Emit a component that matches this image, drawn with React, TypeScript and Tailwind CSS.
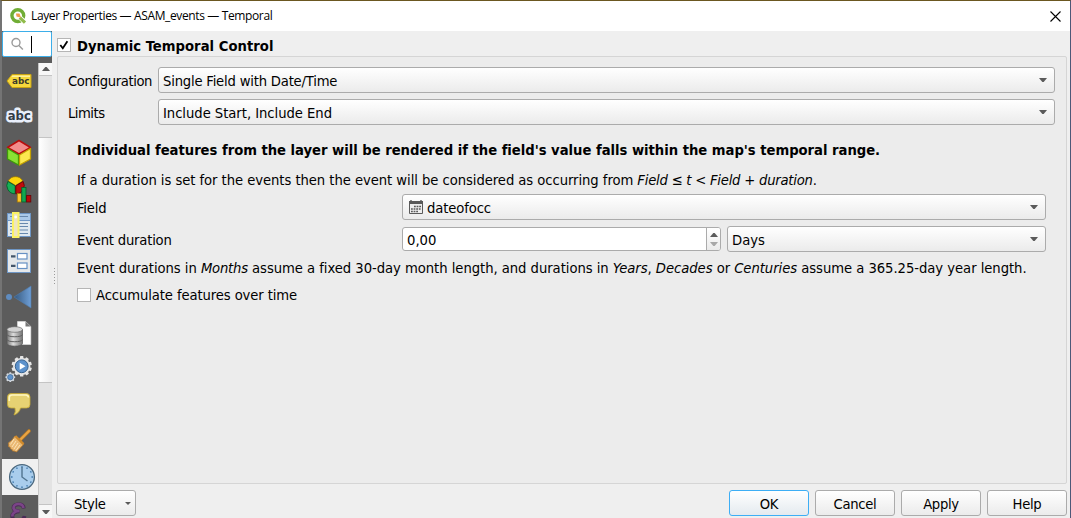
import React from 'react';

const Arrow = ({ up = false, className = 'text-[#5a5a5a]' }: { up?: boolean; className?: string }) => (
  <svg width="8" height="4" viewBox="0 0 8 4" className={`shrink-0 ${className}`}>
    <path d={up ? 'M0 4H8L4.7 0H3.3Z' : 'M0 0H8L4.7 4H3.3Z'} fill="currentColor" />
  </svg>
);

const SideIcon = ({ children, selected = false }: { children: React.ReactNode; selected?: boolean }) => (
  <div className={selected ? 'h-9 w-9 shrink-0 bg-[#f0f0f0]' : 'h-9 w-9 shrink-0'}>
    <svg width="36" height="36" viewBox="0 0 36 36" className="block shrink-0">
      {children}
    </svg>
  </div>
);

const ABC = "font-['DejaVu_Sans'] font-bold [font-stretch:normal]";

const gear = (cx: number, cy: number, r: number, n: number, w: number) =>
  Array.from({ length: n }, (_, i) => (
    <rect
      key={i}
      x={cx - w / 2}
      y={cy - r}
      width={w}
      height={r}
      rx="0.6"
      transform={`rotate(${(i * 360) / n} ${cx} ${cy})`}
    />
  ));

function Sidebar() {
  return (
    <div className="flex h-[455px] w-9 flex-col overflow-hidden">
      <SideIcon>
        <path d="M5 18L10 11.5H29V24.5H10Z" fill="#f6d83c" stroke="#c9a413" />
        <path d="M10.5 12.5H28V14H9.5Z" fill="#fff09a" />
        <text x="10" y="21.3" fontSize="9.5" textLength="17.5" lengthAdjust="spacingAndGlyphs" className={ABC} fill="#3b3a2c">abc</text>
      </SideIcon>
      <SideIcon>
        <text x="5.8" y="21.3" fontSize="13" textLength="23" lengthAdjust="spacingAndGlyphs" className={ABC} fill="#e9effb" stroke="#e9effb" strokeWidth="5" strokeLinejoin="round">abc</text>
        <text x="5.8" y="21.3" fontSize="13" textLength="23" lengthAdjust="spacingAndGlyphs" className={ABC} fill="#333b45">abc</text>
      </SideIcon>
      <SideIcon>
        <path d="M17 5.5L28.5 12.5L17 19L5.5 12.5Z" fill="#f28c8c" stroke="#b80d0d" strokeWidth="1.5" strokeLinejoin="round" />
        <path d="M5.5 13.5L16.5 20V30L5.5 24Z" fill="#8ae234" stroke="#3d9a08" strokeWidth="1.3" strokeLinejoin="round" />
        <path d="M28.5 13.5L17.5 20V30L28.5 24Z" fill="#fce94f" stroke="#c4a000" strokeWidth="1.3" strokeLinejoin="round" />
      </SideIcon>
      <SideIcon>
        <path d="M13.5 14.5L6.2 10A8.3 8.3 0 0 1 20.8 10Z" fill="#fcd50c" stroke="#9c7904" strokeWidth="0.8" />
        <path d="M13.2 14.8L5.9 10.4A8.3 8.3 0 0 0 13.2 22.8Z" fill="#16b057" stroke="#065e2b" strokeWidth="0.9" />
        <path d="M13.8 14.8L21.1 10.4A8.3 8.3 0 0 1 13.8 22.8Z" fill="#c00c0c" stroke="#660404" strokeWidth="0.9" />
        <rect x="15.3" y="22.5" width="4" height="8.5" fill="#fcc62c" stroke="#a97a06" strokeWidth="0.8" />
        <rect x="19.8" y="16.5" width="4.2" height="14.5" fill="#12a850" stroke="#065e2b" strokeWidth="0.8" />
        <rect x="24.6" y="24.5" width="4.2" height="6.5" fill="#b80a0a" stroke="#660404" strokeWidth="0.8" />
      </SideIcon>
      <SideIcon>
        <rect x="5.5" y="6.5" width="23" height="23" fill="#dfe8ef" stroke="#6e96c5" />
        <rect x="6" y="7" width="22" height="6" fill="#a9c8e8" />
        <path d="M6 13.5H28" stroke="#6e96c5" />
        <path d="M8 9.5H26M8 16.5H26M8 19.5H26M8 23H26M8 26.5H26" stroke="#6788ad" strokeWidth="1.2" />
        <rect x="11" y="6" width="5.5" height="24" fill="#eee5c0" stroke="#fbf264" strokeWidth="2" />
        <circle cx="13.7" cy="10" r="1.4" fill="#fff" />
      </SideIcon>
      <SideIcon>
        <rect x="5.5" y="6.5" width="23" height="23" fill="#e5e8ea" stroke="#6e96c5" />
        <rect x="15.5" y="10.5" width="9.5" height="5.5" fill="#fff" stroke="#6791c4" strokeWidth="1.2" />
        <rect x="15.5" y="20" width="9.5" height="5.5" fill="#fff" stroke="#6791c4" strokeWidth="1.2" />
        <path d="M9 13.3H13.5M9 22.8H13.5" stroke="#43566b" strokeWidth="2.2" />
      </SideIcon>
      <SideIcon>
        <defs>
          <linearGradient id="tri"><stop stopColor="#36597f" /><stop offset="1" stopColor="#6f9fd6" /></linearGradient>
        </defs>
        <circle cx="7" cy="18" r="3" fill="#5f8cc0" />
        <path d="M12 18L29 7V29Z" fill="url(#tri)" stroke="#4f7cae" strokeWidth="0.6" />
      </SideIcon>
      <SideIcon>
        <defs>
          <linearGradient id="db"><stop stopColor="#777" /><stop offset="0.4" stopColor="#ddd" /><stop offset="1" stopColor="#737373" /></linearGradient>
        </defs>
        <path d="M15.5 6.5H23.5L28.8 11.5V29.5H15.5Z" fill="#fff" stroke="#e4e4e4" strokeWidth="0.6" />
        <path d="M23.5 6.5V11.5H28.8Z" fill="#777" />
        <path d="M5 14.5V28.5C5 32 20.5 32 20.5 28.5V14.5Z" fill="url(#db)" stroke="#555" strokeWidth="0.7" />
        <path d="M5 19.5C5 22.5 20.5 22.5 20.5 19.5M5 24.5C5 27.5 20.5 27.5 20.5 24.5" fill="none" stroke="#5f5f5f" />
        <ellipse cx="12.75" cy="14.5" rx="7.75" ry="2.8" fill="#d3d3d3" stroke="#6b6b6b" strokeWidth="0.7" />
      </SideIcon>
      <SideIcon>
        <g fill="#e6e6e6">{gear(19.7, 15.3, 10.2, 10, 3.4)}<circle cx="19.7" cy="15.3" r="8.6" /></g>
        <circle cx="19.7" cy="15.3" r="6.4" fill="#5d92cc" stroke="#35618f" />
        <path d="M17.7 11.8L23.5 15.3L17.7 18.8Z" fill="#fff" />
        <g fill="#d2d8df">{gear(8.3, 26.2, 4.9, 8, 2)}<circle cx="8.3" cy="26.2" r="3.9" /></g>
        <circle cx="8.3" cy="26.2" r="2.7" fill="#5d92cc" stroke="#35618f" strokeWidth="0.6" />
      </SideIcon>
      <SideIcon>
        <path d="M9 6.5H24.5Q28 6.5 28 10V17.5Q28 21 24.5 21H18.5Q17.5 26 12 28Q14 24.5 13 21H9Q5.5 21 5.5 17.5V10Q5.5 6.5 9 6.5Z" fill="#e6d273" stroke="#c5a935" strokeWidth="0.8" />
        <path d="M7.3 14V10.5Q7.3 8 10 8H23.5Q26.3 8 26.5 10.5" fill="none" stroke="#fff7c0" strokeWidth="1.6" />
      </SideIcon>
      <SideIcon>
        <path d="M18 17L27 8" stroke="#b87a24" strokeWidth="3.6" strokeLinecap="round" />
        <path d="M18 17L27 8" stroke="#eba545" strokeWidth="2.2" strokeLinecap="round" />
        <path d="M13 13L21.5 21.5L14.5 29Q12 27.5 10.5 28Q10.8 26 8.6 26Q8.8 23.8 6.5 23.5Q7 21.5 6.3 20Q10.5 17.5 13 13Z" fill="#eab872" stroke="#b87a2c" strokeWidth="0.8" />
        <path d="M12 16L8.5 21.5M14 18L10 24M16 20L12 26M18 22L14 27.5" stroke="#fbe3b8" strokeWidth="1" />
        <path d="M13.3 13L21.5 21.2" stroke="#cf8a2c" strokeWidth="2.4" />
      </SideIcon>
      <SideIcon selected>
        <circle cx="20" cy="18" r="12.4" fill="#a9cdec" stroke="#4b687e" strokeWidth="1.3" />
        <g fill="#4e84b5">
          {Array.from({ length: 12 }, (_, i) => (
            <circle key={i} cx="20" cy="7.8" r="0.9" transform={`rotate(${i * 30} 20 18)`} />
          ))}
        </g>
        <path d="M20 8V18L25.5 22" fill="none" stroke="#51748f" strokeWidth="1.4" />
      </SideIcon>
      <SideIcon>
        <path d="M21.8 13.5Q21.5 9 16 9.3Q11.3 9.8 11.5 13Q11.8 16.3 17.5 16.3Q10.3 16.5 10.3 21.5Q10.8 26 16 26Q21.5 26 22.5 21" fill="none" stroke="#4a2a55" strokeWidth="3.8" />
        <path d="M21.5 13Q21 8.8 16 9Q11.5 9.5 11.5 13Q11.8 16 17.5 16Q10.3 16.2 10.3 21.5" fill="none" stroke="#7b4488" strokeWidth="2.6" />
      </SideIcon>
    </div>
  );
}

const FIELD = 'flex items-center rounded-[3px] border border-[#ababab] bg-linear-to-b from-white to-[#ebebeb]';

const Combo = ({ className, children }: { className: string; children: React.ReactNode }) => (
  <div className={`${FIELD} h-[26px] justify-between pr-[7px] pl-1 ${className}`}>
    <span className="pt-[2px]">{children}</span>
    <Arrow />
  </div>
);

const Button = ({ children, primary = false }: { children: React.ReactNode; primary?: boolean }) => (
  <button
    className={
      primary
        ? 'h-[26px] w-20 rounded-[3px] border border-[#3daef5] bg-linear-to-b from-white to-[#e4eaef] pt-[2px] leading-[22px] tracking-[-0.3px]'
        : 'h-[26px] w-20 rounded-[3px] border border-[#ababab] bg-linear-to-b from-white to-[#ebebeb] pt-[2px] leading-[22px] tracking-[-0.3px]'
    }
  >
    {children}
  </button>
);

export default function App() {
  return (
    <div className="flex h-[518px] w-[1071px] flex-col overflow-hidden border-t border-r border-l-2 border-t-[#6b5720] border-r-[#4d5878] border-l-[#747474] bg-[#efefef] font-['DejaVu_Sans_Condensed','DejaVu_Sans',sans-serif] text-[14.67px] whitespace-nowrap text-black [font-stretch:condensed]">
      <header className="flex h-[30px] shrink-0 items-center bg-white pr-[9px] pl-2">
        <svg width="17" height="17" viewBox="0 0 17 17">
          <circle cx="7.8" cy="7.6" r="5.9" fill="none" stroke="#70ad35" strokeWidth="3.4" />
          <path d="M9 8.7L15 14.5" stroke="#fff" strokeWidth="4.6" />
          <path d="M9.8 9.6L15 14.6" stroke="#8fbb4a" strokeWidth="3.2" />
          <path d="M6 5.5H9.5L11 9.8L6.5 8.5Z" fill="#f09a4b" />
        </svg>
        <h1 className="ml-1 grow font-['Open_Sans',sans-serif] text-[12px] tracking-[-0.37px] [font-stretch:normal]">Layer Properties — ASAM_events — Temporal</h1>
        <svg width="11" height="11" viewBox="0 0 11 11">
          <path d="M0.5 0.5L10.5 10.5M10.5 0.5L0.5 10.5" stroke="#000" strokeWidth="1.1" />
        </svg>
      </header>

      <div className="flex min-h-0 grow">
        <aside className="flex w-[50px] shrink-0 flex-col bg-[#5c5c5c]">
          <div className="flex h-[26px] shrink-0 items-center rounded-[2px] border border-[#3daee9] bg-white pl-2">
            <svg width="14" height="14" viewBox="0 0 14 14" fill="none" stroke="#9b9b9b" strokeWidth="1.4">
              <circle cx="5" cy="5.5" r="4" />
              <path d="M7.9 8.4L11.9 12.4" />
            </svg>
            <div className="ml-[6px] h-[17px] w-px bg-black" />
          </div>
          <div className="mt-[6px] flex min-h-0 grow">
            <Sidebar />
            <div className="flex w-[14px] flex-col border-l border-[#c6c6c6] bg-[#e3e3e3]">
              <div className="flex h-[13px] items-center justify-center border-b border-[#c4c4c4] bg-[#f7f7f7]">
                <Arrow up />
              </div>
              <div className="mt-[61px] h-[246px] border-y border-[#c4c4c4] bg-linear-to-r from-white to-[#ececec]" />
              <div className="grow" />
              <div className="flex h-[14px] items-center justify-center border-t border-[#c4c4c4] bg-[#f7f7f7]">
                <Arrow />
              </div>
            </div>
          </div>
        </aside>

        <div className="flex w-[5px] shrink-0 flex-col items-center gap-px pt-[237px]">
          {[0, 1, 2, 3, 4, 5].map((i) => (
            <div key={i} className="mb-px h-px w-px bg-[#9a9a9a]" />
          ))}
        </div>

        <main className="flex min-w-0 grow flex-col pr-[3px]">
          <div className="flex h-[25px] shrink-0 items-center">
            <div className="mt-[2px] flex h-[14px] w-[14px] items-center justify-center border border-[#b5b5b5] bg-white">
              <svg width="10" height="10" viewBox="0 0 10 10">
                <path d="M1.3 5L3.8 8.3L8.4 1.2" fill="none" stroke="#000" strokeWidth="1.8" />
              </svg>
            </div>
            <h2 className="mt-[5px] ml-[6px] text-[14.67px] font-bold tracking-[0.03px]">Dynamic Temporal Control</h2>
          </div>

          <section className="h-[428px] shrink-0 rounded-[2px] border border-[#d5d5d5] bg-[#ececec] pl-[10px]">
            <div className="mt-[10px] flex h-[26px] items-center">
              <span className="w-[90px] pt-[2px] tracking-[-0.42px]">Configuration</span>
              <Combo className="w-[897px] tracking-[-0.2px]">Single Field with Date/Time</Combo>
            </div>
            <div className="mt-[6px] flex h-[26px] items-center">
              <span className="w-[90px] pt-[2px] tracking-[-0.5px]">Limits</span>
              <Combo className="w-[897px] tracking-[-0.04px]">Include Start, Include End</Combo>
            </div>
            <div className="pl-[9px]">
              <p className="mt-[13px] h-[24px] leading-6 font-bold tracking-[-0.02px]">
                Individual features from the layer will be rendered if the field&apos;s value falls within the map&apos;s temporal range.
              </p>
              <p className="mt-[6px] h-[24px] leading-6 tracking-[-0.057px]">
                If a duration is set for the events then the event will be considered as occurring from <i className="tracking-[-0.23px]">Field ≤ t &lt; Field + duration</i>.
              </p>
              <div className="mt-[2px] flex h-[26px] items-center">
                <span className="w-[325px] pt-[2px] tracking-[-0.2px]">Field</span>
                <Combo className="w-[644px] tracking-[-0.12px]">
                  <span className="flex items-center">
                    <svg width="16" height="16" viewBox="0 0 16 16" className="mr-1 mb-[2px]">
                      <path d="M2.5 3.5H15.5V14.5H2.5Z" fill="#eee" stroke="#5a5a5a" />
                      <path d="M2 2H16V5H2Z" fill="#5a5a5a" />
                      <path d="M4 1V3M14 1V3" stroke="#5a5a5a" strokeWidth="1.4" />
                      <path d="M7 7.5H14M4 10H14M4 12.5H11" stroke="#5a5a5a" strokeWidth="1.6" strokeDasharray="1.8 0.8" />
                    </svg>
                    dateofocc
                  </span>
                </Combo>
              </div>
              <div className="mt-[6px] flex h-[26px] items-center">
                <span className="w-[325px] pt-[2px] tracking-[-0.2px]">Event duration</span>
                <div className="flex h-6 w-[319px] overflow-hidden rounded-[3px] border border-[#ababab] bg-white">
                  <span className="grow pl-1 leading-[23px]">0,00</span>
                  <div className="flex w-[14px] flex-col items-center justify-center gap-[5px] border-l border-[#ababab] bg-linear-to-b from-white to-[#ebebeb]">
                    <Arrow up />
                    <Arrow className="text-[#a8a8a8]" />
                  </div>
                </div>
                <Combo className="ml-[6px] w-[319px]">Days</Combo>
              </div>
              <p className="mt-[4px] h-[24px] leading-6 tracking-[-0.043px]">
                Event durations in <i className="tracking-[-0.2px]">Months</i> assume a fixed 30-day month length, and durations in <i>Years</i>, <i>Decades</i> or <i>Centuries</i> assume a 365.25-day year length.
              </p>
              <div className="mt-[3px] flex h-[24px] items-center">
                <div className="h-[14px] w-[14px] border border-[#b5b5b5] bg-white" />
                <span className="ml-[5px] tracking-[-0.1px]">Accumulate features over time</span>
              </div>
            </div>
          </section>

          <footer className="mt-[6px] flex gap-[6px]">
            <div className={`${FIELD} -ml-px h-[26px] w-20 justify-between pr-1 pl-[17px] tracking-[-0.3px]`}>
              <span className="pt-[2px]">Style</span>
              <svg width="6" height="3" viewBox="0 0 6 3"><path d="M0 0H6L3 3Z" fill="#5a5a5a" /></svg>
            </div>
            <div className="grow" />
            <Button primary>OK</Button>
            <Button>Cancel</Button>
            <Button>Apply</Button>
            <Button>Help</Button>
          </footer>
        </main>
      </div>
    </div>
  );
}
